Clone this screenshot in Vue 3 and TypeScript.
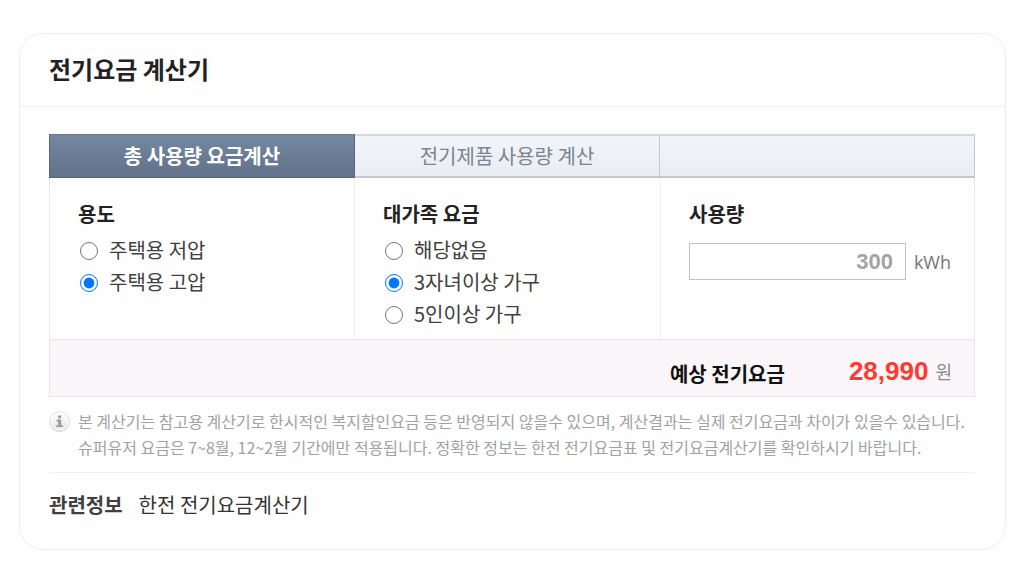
<script setup lang="ts">
import { ref } from 'vue'

interface Option {
  value: string
  label: string
}

const tabs: string[] = ['총 사용량 요금계산', '전기제품 사용량 계산']
const activeTab = ref(0)

const purposes: Option[] = [
  { value: 'low', label: '주택용 저압' },
  { value: 'high', label: '주택용 고압' },
]
const families: Option[] = [
  { value: 'none', label: '해당없음' },
  { value: 'children', label: '3자녀이상 가구' },
  { value: 'members', label: '5인이상 가구' },
]

const purpose = ref('high')
const family = ref('children')
const usage = ref('300')
const total = ref(28990)
</script>

<template>
  <main class="card">
    <header class="head">
      <h1>전기요금 계산기</h1>
    </header>
    <div class="body">
      <div class="tabs">
        <button
          v-for="(tab, i) in tabs"
          :key="tab"
          type="button"
          class="tab"
          :class="{ active: i === activeTab }"
          @click="activeTab = i"
        >
          {{ tab }}
        </button>
        <span class="tab rest"></span>
      </div>

      <form class="panel" @submit.prevent>
        <div class="columns">
          <fieldset class="column">
            <legend>용도</legend>
            <label v-for="o in purposes" :key="o.value" class="option">
              <input v-model="purpose" type="radio" name="purpose" :value="o.value" />
              <span>{{ o.label }}</span>
            </label>
          </fieldset>
          <fieldset class="column">
            <legend>대가족 요금</legend>
            <label v-for="o in families" :key="o.value" class="option">
              <input v-model="family" type="radio" name="family" :value="o.value" />
              <span>{{ o.label }}</span>
            </label>
          </fieldset>
          <div class="column">
            <label class="title" for="usage">사용량</label>
            <div class="usage">
              <input id="usage" v-model="usage" type="text" inputmode="numeric" />
              <span class="unit">kWh</span>
            </div>
          </div>
        </div>
        <div class="total">
          <strong class="total-label">예상 전기요금</strong>
          <output class="amount">{{ total.toLocaleString('en-US') }}</output>
          <span class="won">원</span>
        </div>
      </form>

      <div class="note">
        <svg class="info" viewBox="0 0 20 20" aria-hidden="true">
          <defs>
            <linearGradient id="info-fill" x1="0" y1="0" x2="0" y2="1">
              <stop offset="0" stop-color="#ffffff" />
              <stop offset="1" stop-color="#e6e6e6" />
            </linearGradient>
            <linearGradient id="info-rim" x1="0" y1="0" x2="0" y2="1">
              <stop offset="0" stop-color="#ebebeb" />
              <stop offset="1" stop-color="#cfcfcf" />
            </linearGradient>
          </defs>
          <circle cx="10" cy="10" r="9.3" fill="#fff" stroke="url(#info-rim)" stroke-width="1.2" />
          <circle cx="10" cy="10" r="7.6" fill="url(#info-fill)" />
          <path
            d="M8.6 4.4h3v2.4h-3zM7.2 8.2h4.4v5.3h1.7v1.8H6.9v-1.8h1.8V10H7.2z"
            fill="#9b9b9b"
          />
        </svg>
        <p>
          <span>본 계산기는 참고용 계산기로 한시적인 복지할인요금 등은 반영되지 않을수 있으며, 계산결과는 실제 전기요금과 차이가 있을수 있습니다.</span>
          <span>슈퍼유저 요금은 7~8월, 12~2월 기간에만 적용됩니다. 정확한 정보는 한전 전기요금표 및 전기요금계산기를 확인하시기 바랍니다.</span>
        </p>
      </div>

      <footer class="related">
        <strong>관련정보</strong>
        <a href="#">한전 전기요금계산기</a>
      </footer>
    </div>
  </main>
</template>

<style>
body {
  background: #fefefe;
}
</style>

<style scoped>
.card {
  box-sizing: border-box;
  margin: 33px 18px 12px 19px;
  border: 1px solid #ededed;
  border-radius: 24px;
  background: #fefefe;
  color: #404040;
  font-family: 'Noto Sans CJK KR', sans-serif;
  font-size: 20px;
}
.head {
  padding: 17px 29px 19px;
  border-bottom: 1px solid #f1f1f1;
}
h1 {
  margin: 0;
  color: #222;
  font-size: 24px;
  line-height: 36px;
  font-weight: 700;
}
.body {
  padding: 27px 30px 28px 29px;
}
.tabs,
.columns {
  display: grid;
  grid-template-columns: 306fr 305fr 315fr;
}
.columns {
  grid-template-columns: 304fr 306fr 314fr;
}
.tab {
  box-sizing: border-box;
  height: 44px;
  margin: 0;
  padding: 0;
  border: solid #c3c9cf;
  border-width: 2px 1px 2px 0;
  border-top-color: #d3d8dc;
  background: linear-gradient(#f2f5f8, #e9edf2);
  color: #7a8593;
  font-family: inherit;
  font-size: 20px;
  line-height: 40px;
  text-align: center;
}
.tab.active {
  border: 1px solid #56667f;
  border-top-color: #677a92;
  background: linear-gradient(#7488a1, #617289);
  color: #fff;
  font-weight: 700;
}
.panel {
  border: 1px solid #e5e7ea;
  border-top: 0;
}
.column {
  min-width: 0;
  margin: 0;
  padding: 22px 23px 9px 28px;
  border: 0;
}
.column + .column {
  border-left: 1px solid #f1eff2;
}
legend,
.title {
  display: block;
  margin-bottom: 6px;
  padding: 0;
  color: #222;
  font-size: 20px;
  line-height: 28px;
  font-weight: 700;
}
legend {
  float: left;
  width: 100%;
}
.option {
  display: flex;
  clear: both;
  align-items: center;
  gap: 11px;
  height: 32px;
  line-height: 32px;
}
.option input {
  flex: none;
  width: 18px;
  height: 18px;
  margin: 2px 0 0 2px;
}
.usage {
  display: flex;
  align-items: center;
  gap: 8px;
  padding-top: 9px;
}
.usage input {
  box-sizing: border-box;
  flex: 1;
  min-width: 0;
  height: 37px;
  padding: 0 12px;
  border: 1px solid #bcc3ca;
  border-radius: 0;
  background: #fff;
  color: #a3a3a3;
  font: 700 22px 'Liberation Sans', Arial, sans-serif;
  text-align: right;
}
.unit {
  color: #777;
  font-family: 'Open Sans', sans-serif;
  font-size: 18px;
}
.total {
  display: flex;
  align-items: center;
  justify-content: flex-end;
  height: 56px;
  padding: 0 22px;
  border-top: 1px solid #e5e7ea;
  background: #f9f5f9;
}
.total-label {
  margin-right: 64px;
  padding-top: 12px;
  color: #111;
  line-height: 28px;
}
.amount {
  margin-right: 7px;
  padding-top: 6px;
  color: #ff3a32;
  font: 700 26px/28px 'Liberation Sans', Arial, sans-serif;
}
.won {
  padding-top: 6px;
  color: #8a8a8a;
  font-size: 18px;
  line-height: 28px;
}
.note {
  display: flex;
  gap: 8px;
  padding: 11px 0 12px;
  border-bottom: 1px solid #f1f1f1;
}
.info {
  flex: none;
  width: 21px;
  height: 21px;
  margin-top: 3px;
}
.note p {
  margin: 0;
  color: #a2a2a2;
  font-size: 16px;
  line-height: 26px;
}
.note span {
  display: block;
}
.related {
  display: flex;
  gap: 16px;
  padding-top: 16px;
  line-height: 32px;
}
.related a {
  color: #333;
  text-decoration: none;
}
</style>
